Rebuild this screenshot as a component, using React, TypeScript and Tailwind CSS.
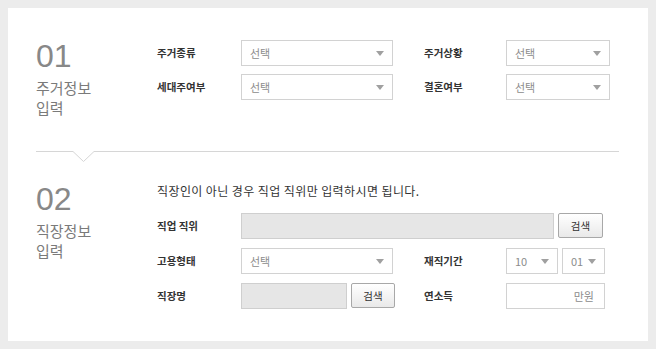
import React from 'react'

const font = { fontFamily: '"Noto Sans CJK KR", "Liberation Sans", sans-serif' }

function Arrow() {
  return (
    <svg width="8" height="5" viewBox="0 0 8 5" className="shrink-0">
      <path d="M0 0 L8 0 L4 5 Z" fill="#a0a0a0" />
    </svg>
  )
}

function Select({ value = '선택', className = '' }: { value?: string; className?: string }) {
  return (
    <div
      className={`h-[26px] border border-[#d2d2d2] bg-white flex items-center justify-between pl-[8px] pr-[8px] text-[11px] text-[#8c8c8c] ${className}`}
    >
      <span>{value}</span>
      <Arrow />
    </div>
  )
}

function Label({ children, className = '' }: { children: React.ReactNode; className?: string }) {
  return (
    <div className={`text-[10.5px] font-bold text-[#333] leading-[13px] pt-[6px] ${className}`}>
      {children}
    </div>
  )
}

function SearchButton({ className = '' }: { className?: string }) {
  return (
    <button
      className={`h-[25px] border border-[#a8a8a8] rounded-[2px] bg-gradient-to-b from-white to-[#e9e9e9] text-[10.5px] text-[#333] ${className}`}
    >
      검색
    </button>
  )
}

function SectionTitle({ num, lines, className = '' }: { num: string; lines: string[]; className?: string }) {
  return (
    <div className={`w-[121px] shrink-0 ${className}`}>
      <div className="text-[32px] leading-[32px] text-[#888]" style={{ fontFamily: '"Liberation Sans", sans-serif' }}>
        {num}
      </div>
      <div className="mt-[6px] text-[15px] leading-[20px] text-[#7a7a7a]">
        {lines.map((l) => (
          <div key={l}>{l}</div>
        ))}
      </div>
    </div>
  )
}

export default function App() {
  return (
    <div className="w-[656px] h-[349px] bg-[#ececec] p-[8px]" style={font}>
      <div className="w-[640px] h-[333px] bg-white pl-[28px] pr-[30px]">
        {/* 01 주거정보 */}
        <div className="flex pt-[29px] h-[143px]">
          <SectionTitle num="01" lines={['주거정보', '입력']} className="pt-[3px]" />
          <div className="flex flex-col gap-[8px] pt-[3px]">
            <div className="flex">
              <Label className="w-[84px]">주거종류</Label>
              <Select className="w-[152px]" />
              <Label className="w-[82px] ml-[31px]">주거상황</Label>
              <Select className="w-[104px]" />
            </div>
            <div className="flex">
              <Label className="w-[84px]">세대주여부</Label>
              <Select className="w-[152px]" />
              <Label className="w-[82px] ml-[31px]">결혼여부</Label>
              <Select className="w-[104px]" />
            </div>
          </div>
        </div>

        <div className="relative h-px bg-[#d6d6d6] w-[583px]">
          <div className="absolute left-[37px] top-0 w-[21px] h-[11px] bg-white overflow-hidden">
            <svg width="21" height="11" viewBox="0 0 21 11">
              <path d="M0 0.5 L10.5 10.5 L21 0.5" fill="none" stroke="#d6d6d6" strokeWidth="1" />
            </svg>
          </div>
        </div>

        {/* 02 직장정보 */}
        <div className="flex pt-[34px]">
          <SectionTitle num="02" lines={['직장정보', '입력']} className="-mt-[3px]" />
          <div className="flex flex-col">
            <div className="text-[12px] leading-[14px] text-[#333] tracking-[0.4px] -mt-[2px]">
              직장인이 아닌 경우 직업 직위만 입력하시면 됩니다.
            </div>
            <div className="flex flex-col gap-[9px] mt-[15px]">
              <div className="flex">
                <Label className="w-[84px]">직업 직위</Label>
                <div className="w-[313px] h-[26px] border border-[#cfcfcf] bg-[#e6e6e6]" />
                <SearchButton className="w-[45px] ml-[4px]" />
              </div>
              <div className="flex">
                <Label className="w-[84px]">고용형태</Label>
                <Select className="w-[152px]" />
                <Label className="w-[82px] ml-[31px]">재직기간</Label>
                <Select value="10" className="w-[52px]" />
                <Select value="01" className="w-[43px] ml-[4px]" />
              </div>
              <div className="flex">
                <Label className="w-[84px]">직장명</Label>
                <div className="w-[106px] h-[26px] border border-[#cfcfcf] bg-[#e6e6e6]" />
                <SearchButton className="w-[44px] ml-[4px]" />
                <Label className="w-[82px] ml-[29px]">연소득</Label>
                <div className="w-[99px] h-[26px] border border-[#d2d2d2] bg-white flex items-center justify-end pr-[10px] text-[11px] text-[#8c8c8c]">
                  만원
                </div>
              </div>
            </div>
          </div>
        </div>
      </div>
    </div>
  )
}
